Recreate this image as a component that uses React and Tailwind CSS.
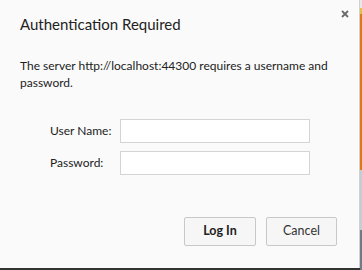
import React from 'react'

const font = { fontFamily: 'Lato, "Open Sans", sans-serif' }

function Field({ label }) {
  return (
    <div className="flex items-center">
      <label className="w-[70px] text-[12px] text-[#222]">{label}</label>
      <input className="h-[24px] w-[190px] border border-[#d4d4d4] bg-white outline-none" />
    </div>
  )
}

export default function App() {
  return (
    <div className="flex h-[270px] w-[362px] bg-[#333]" style={font}>
      <div className="flex h-[268px] w-[360px] flex-col border-r border-[#d0d0d0] bg-[#fafafa]">
        <div className="flex items-start justify-between pl-[20px] pr-[10px] pt-[10px]">
          <h1 className="mt-[3px] text-[15px] leading-[22px] text-[#222]">Authentication Required</h1>
          <svg width="8" height="8" viewBox="0 0 8 8" className="mt-[0px]">
            <path d="M1 1L7 7M7 1L1 7" stroke="#6a6a6a" strokeWidth="1.8" />
          </svg>
        </div>
        <p className="mt-[22px] w-[340px] pl-[20px] text-[12px] leading-[17px] text-[#222]">
          The server http://localhost:44300 requires a username and password.
        </p>
        <div className="mt-[28px] flex flex-col gap-[8px] pl-[50px]">
          <Field label="User Name:" />
          <Field label="Password:" />
        </div>
        <div className="mt-[42px] flex justify-end gap-[10px] pr-[22px]">
          <button className="h-[29px] w-[72px] rounded-[2px] border border-[#c8c8c8] bg-[#f6f6f6] text-[12.5px] font-bold text-[#222]">
            Log In
          </button>
          <button className="h-[29px] w-[71px] rounded-[2px] border border-[#c8c8c8] bg-[#f6f6f6] text-[12.5px] text-[#333]">
            Cancel
          </button>
        </div>
      </div>
      <div className="flex w-[2px] flex-col">
        <div className="h-[8px] bg-[#e8e8e8]" />
        <div className="h-[6px] bg-[#e6c040]" />
        <div className="h-[156px] bg-[#e0780f]" />
        <div className="h-[60px] bg-[#c5ccd3]" />
        <div className="flex-1 bg-[#6e7b88]" />
      </div>
    </div>
  )
}
